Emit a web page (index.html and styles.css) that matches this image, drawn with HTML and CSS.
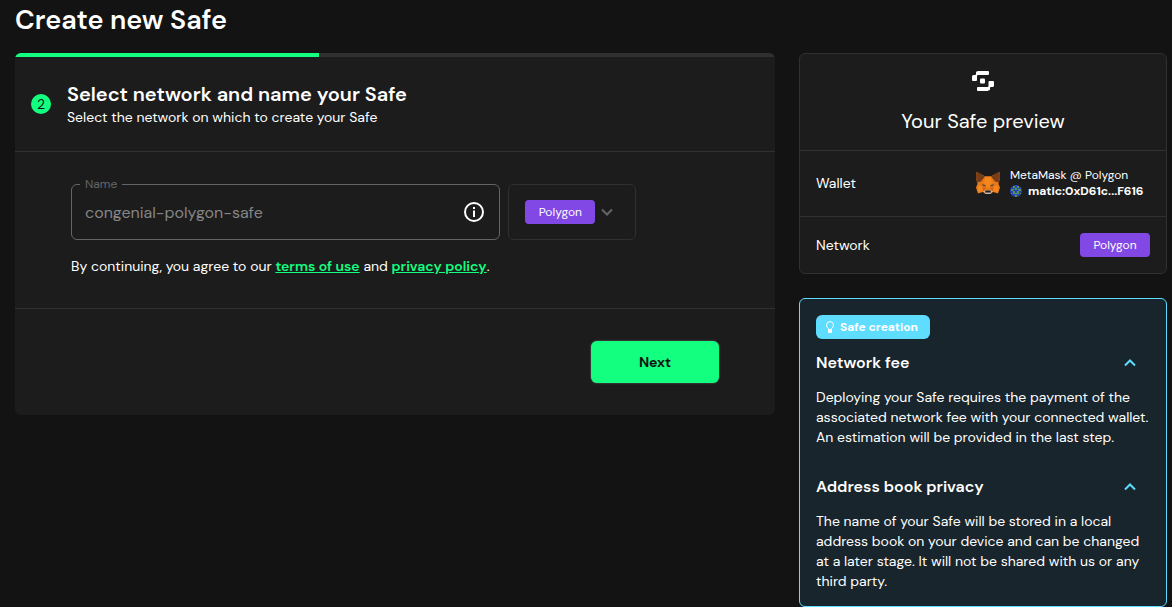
FILE: index.html
```html
<!DOCTYPE html>
<html lang="en">
<head>
<meta charset="utf-8">
<title>Create new Safe</title>
<link rel="stylesheet" href="styles.css">
</head>
<body>
<main class="page">
  <h1 class="page-title">Create new Safe</h1>
  <div class="columns">
    <form class="stepper">
      <div class="progress"><div class="progress-bar"></div></div>
      <header class="step-header">
        <span class="step-number">2</span>
        <div>
          <h2 class="step-title">Select network and name your Safe</h2>
          <p class="step-subtitle">Select the network on which to create your Safe</p>
        </div>
      </header>
      <section class="step-body">
        <div class="field-row">
          <div class="name-field">
            <label class="name-label" for="safe-name">Name</label>
            <input class="name-input" id="safe-name" type="text" placeholder="congenial-polygon-safe">
            <svg class="info-icon" viewBox="0 0 20 20" role="img" aria-label="Information">
              <circle cx="10" cy="10" r="9" fill="none" stroke="#fff" stroke-width="2"/>
              <path d="M9 5h2v2H9zM9 8.500h2V15H9z" fill="#fff"/>
            </svg>
          </div>
          <div class="network-field">
            <select class="chip network-select" aria-label="Network">
              <option>Polygon</option>
            </select>
            <svg class="chevron" viewBox="0 0 24 24" aria-hidden="true"><path d="M7 9.500l5 5 5-5" fill="none" stroke="currentColor" stroke-width="2"/></svg>
          </div>
        </div>
        <p class="terms">By continuing, you agree to our <a href="#terms">terms of use</a> and <a href="#privacy">privacy policy</a>.</p>
      </section>
      <footer class="step-footer">
        <button class="next" type="submit">Next</button>
      </footer>
    </form>

    <aside class="sidebar">
      <section class="preview">
        <header class="preview-header">
          <svg class="logo" viewBox="0 0 22 20" aria-hidden="true">
            <path fill="#fff" d="M6 0h10q1 0 1 1v2q0 1-1 1H6q-1 0-1 1v4q0 1-1 1H1Q0 10 0 9V5.500Q0 4 1.500 4H3q1 0 1-1V1.500Q4 0 6 0zM16 20H6q-1 0-1-1v-2q0-1 1-1h9.500q1 0 1-1v-4q0-1 1-1H21q1 0 1 1v3.500q0 1.500-1.500 1.500H19q-1 0-1 1v1.500q0 1-2 1z"/>
            <rect x="8" y="7.500" width="5" height="5" rx="1" fill="#fff"/>
          </svg>
          <h2 class="preview-title">Your Safe preview</h2>
        </header>
        <div class="preview-row wallet-row">
          <span>Wallet</span>
          <div class="wallet">
            <svg class="fox" viewBox="0 0 24 24" role="img" aria-label="MetaMask">
              <path fill="#e8791b" d="M.500 1l9 4.500h5l9-4.500.500 6-1.500 6 1.500 3.500-2 6-5-1.500-2.500 2h-5L7 21l-5 1.500-2-6L1.500 13 0 7z"/>
              <path fill="#763d16" d="M.500.500L9 5.500l-4 5-4 1L0 6zM23.500.500L15 5.500l4 5 4 1 1-5.500z"/>
              <path fill="#f6851b" d="M9 5.500h6l1 7-2 4h-4l-2-4zM1.500 14l5 2-.500 4.500-4 1zM22.500 14l-5 2 .500 4.500 4 1z"/>
              <path fill="#cd6116" d="M6.500 16l3 1-2 3.500zM17.500 16l-3 1 2 3.500z"/>
              <path fill="#6b4a35" d="M6 13l3.500 1 .500 1.500-3-.500zM18 13l-3.500 1-.500 1.500 3-.500z"/>
              <path fill="#c9b5a8" d="M7 20l2.500-.500h5l2.500.500-2.500 3h-5z"/>
              <path fill="#222" d="M9.500 19.500h5l.500 2H9z"/>
            </svg>
            <div class="wallet-text">
              <div>MetaMask @ Polygon</div>
              <div class="address">
                <svg class="blockie" viewBox="0 0 12 12" aria-hidden="true">
                  <circle cx="6" cy="6" r="6" fill="#2547b8"/>
                  <path fill="#5c8f48" d="M3 1h2v2H3zM7 1h2v2H7zM1 4h2v2H1zM9 4h2v2H9zM5 3h2v2H5zM3 6h2v3H3zM7 6h2v3H7zM1 8h1v1H1zM10 8h1v1h-1zM5 10h2v2H5z"/>
                  <path fill="#42a5a2" d="M3 4h1v1H3zM8 4h1v1H8zM5 8h2v1H5z"/>
                </svg>
                <b>matic:0xD61c...F616</b>
              </div>
            </div>
          </div>
        </div>
        <div class="preview-row">
          <span>Network</span>
          <span class="chip">Polygon</span>
        </div>
      </section>

      <section class="hints">
        <div class="badge">
          <svg class="bulb" viewBox="0 0 8 12" aria-hidden="true">
            <path d="M2.500 8.500V7.500C1 6.500.600 5.500.600 4a3.400 3.400 0 0 1 6.800 0c0 1.500-.400 2.500-1.900 3.500v1z" fill="none" stroke="#fff"/>
            <path d="M2 8h4v3q0 1-1 1H3q-1 0-1-1z" fill="#fff"/>
          </svg>
          <span>Safe creation</span>
        </div>
        <details class="hint" open>
          <summary class="hint-title">Network fee
            <svg class="chevron" viewBox="0 0 24 24" aria-hidden="true"><path d="M7 14.500l5-5 5 5" fill="none" stroke="currentColor" stroke-width="2"/></svg>
          </summary>
          <p class="hint-text">Deploying your Safe requires the payment of the associated network fee with your connected wallet. An estimation will be provided in the last step.</p>
        </details>
        <details class="hint" open>
          <summary class="hint-title">Address book privacy
            <svg class="chevron" viewBox="0 0 24 24" aria-hidden="true"><path d="M7 14.500l5-5 5 5" fill="none" stroke="currentColor" stroke-width="2"/></svg>
          </summary>
          <p class="hint-text">The name of your Safe will be stored in a local address book on your device and can be changed at a later stage. It will not be shared with us or any third party.</p>
        </details>
      </section>
    </aside>
  </div>
</main>
</body>
</html>
```
FILE: styles.css
```css
:root {
  --background: #121312;
  --paper: #1c1c1c;
  --border: #303033;
  --primary: #12ff80;
  --info: #5fddff;
  --muted: #636669;
}

* {
  box-sizing: border-box;
}

body {
  margin: 0;
  background: var(--background);
  color: #fff;
  font: 14px/20px "DM Sans", Inter, "Open Sans", sans-serif;
}

h1, h2, p {
  margin: 0;
}

.page {
  padding: 0 5px 0 15px;
}

.page-title {
  margin-bottom: 13px;
  font-size: 27px;
  font-weight: 600;
  line-height: 40px;
}

.columns {
  display: grid;
  grid-template-columns: repeat(12, 1fr);
  gap: 24px;
  align-items: start;
}

.stepper {
  grid-column: span 8;
  overflow: hidden;
  border-radius: 6px;
  background: var(--paper);
}

.progress {
  height: 4px;
  background: var(--border);
}

.progress-bar {
  width: 40%;
  height: 100%;
  background: var(--primary);
}

.step-header {
  display: flex;
  align-items: center;
  gap: 16px;
  padding: 24px 16px;
  border-bottom: 1px solid var(--border);
}

.step-number {
  width: 20px;
  border-radius: 50%;
  background: var(--primary);
  color: var(--background);
  text-align: center;
}

.step-title {
  font-size: 20px;
  font-weight: 600;
  line-height: 26px;
}

.step-body {
  padding: 32px 56px;
  border-bottom: 1px solid var(--border);
}

.field-row {
  display: grid;
  grid-template-columns: repeat(12, 1fr);
  gap: 8px;
  margin-bottom: 16px;
}

.name-field {
  position: relative;
  grid-column: span 8;
  display: flex;
  align-items: center;
  height: 56px;
  padding: 0 15px 0 13px;
  border: 1px solid var(--muted);
  border-radius: 6px;
}

.name-label {
  position: absolute;
  top: -9px;
  left: 8px;
  padding: 0 5px;
  background: var(--paper);
  color: var(--muted);
  font-size: 12px;
  line-height: 16px;
}

.name-input {
  flex: 1;
  min-width: 0;
  padding: 2px 0 0;
  border: 0;
  outline: 0;
  background: none;
  color: inherit;
  font: inherit;
  font-size: 16px;
}

.name-input::placeholder {
  color: #858585;
  opacity: 1;
}

.info-icon {
  width: 20px;
  height: 20px;
}

.network-field {
  grid-column: span 4;
  justify-self: start;
  display: flex;
  align-items: center;
  padding: 0 16px;
  border: 1px solid var(--border);
  border-radius: 6px;
  color: var(--muted);
}

.chip {
  width: 70px;
  height: 24px;
  border: 0;
  border-radius: 4px;
  background: #8248e5;
  color: #fff;
  font: inherit;
  font-size: 12px;
  line-height: 24px;
  text-align: center;
}

.network-select {
  appearance: none;
  padding: 0;
  text-align-last: center;
}

.chevron {
  width: 24px;
  height: 24px;
}

.terms a {
  color: var(--primary);
  font-weight: 600;
}

.step-footer {
  display: flex;
  justify-content: flex-end;
  padding: 32px 56px;
}

.next {
  min-width: 128px;
  height: 42px;
  border: 0;
  border-radius: 6px;
  background: var(--primary);
  box-shadow: 0 0 2px #777;
  color: var(--background);
  font: inherit;
  font-weight: 700;
}

.sidebar {
  grid-column: span 4;
  display: grid;
  gap: 24px;
}

.preview {
  border: 1px solid var(--border);
  border-radius: 6px;
  background: var(--paper);
}

.preview-header {
  display: flex;
  flex-direction: column;
  align-items: center;
  gap: 17px;
  padding: 17px 16px 15px;
}

.logo {
  width: 22px;
  height: 20px;
}

.preview-title {
  font-size: 20px;
  font-weight: 400;
  line-height: 27px;
}

.preview-row {
  display: flex;
  align-items: center;
  justify-content: space-between;
  padding: 16px;
  border-top: 1px solid var(--border);
}

.wallet-row {
  padding-bottom: 17px;
}

.wallet {
  display: flex;
  align-items: center;
  gap: 10px;
}

.fox {
  width: 24px;
  height: 24px;
}

.wallet-text {
  min-width: 140px;
  font-size: 12px;
  line-height: 16px;
}

.address {
  display: flex;
  align-items: center;
  gap: 6px;
}

.blockie {
  width: 12px;
  height: 12px;
}

.hints {
  padding: 16px 16px 15px;
  border: 1px solid var(--info);
  border-radius: 6px;
  background: #19252c;
}

.badge {
  display: inline-flex;
  align-items: center;
  gap: 6px;
  height: 24px;
  margin-bottom: 12px;
  padding: 0 12px 0 10px;
  border-radius: 6px;
  background: var(--info);
  font-size: 12px;
  font-weight: 700;
  vertical-align: top;
}

.bulb {
  width: 8px;
  height: 12px;
}

.hint + .hint {
  margin-top: 28px;
}

.hint-title {
  display: flex;
  align-items: center;
  justify-content: space-between;
  margin-bottom: 12px;
  padding-right: 8px;
  font-size: 16px;
  font-weight: 600;
  line-height: 24px;
  list-style: none;
  cursor: pointer;
}

.hint-title .chevron {
  color: var(--info);
}
```
